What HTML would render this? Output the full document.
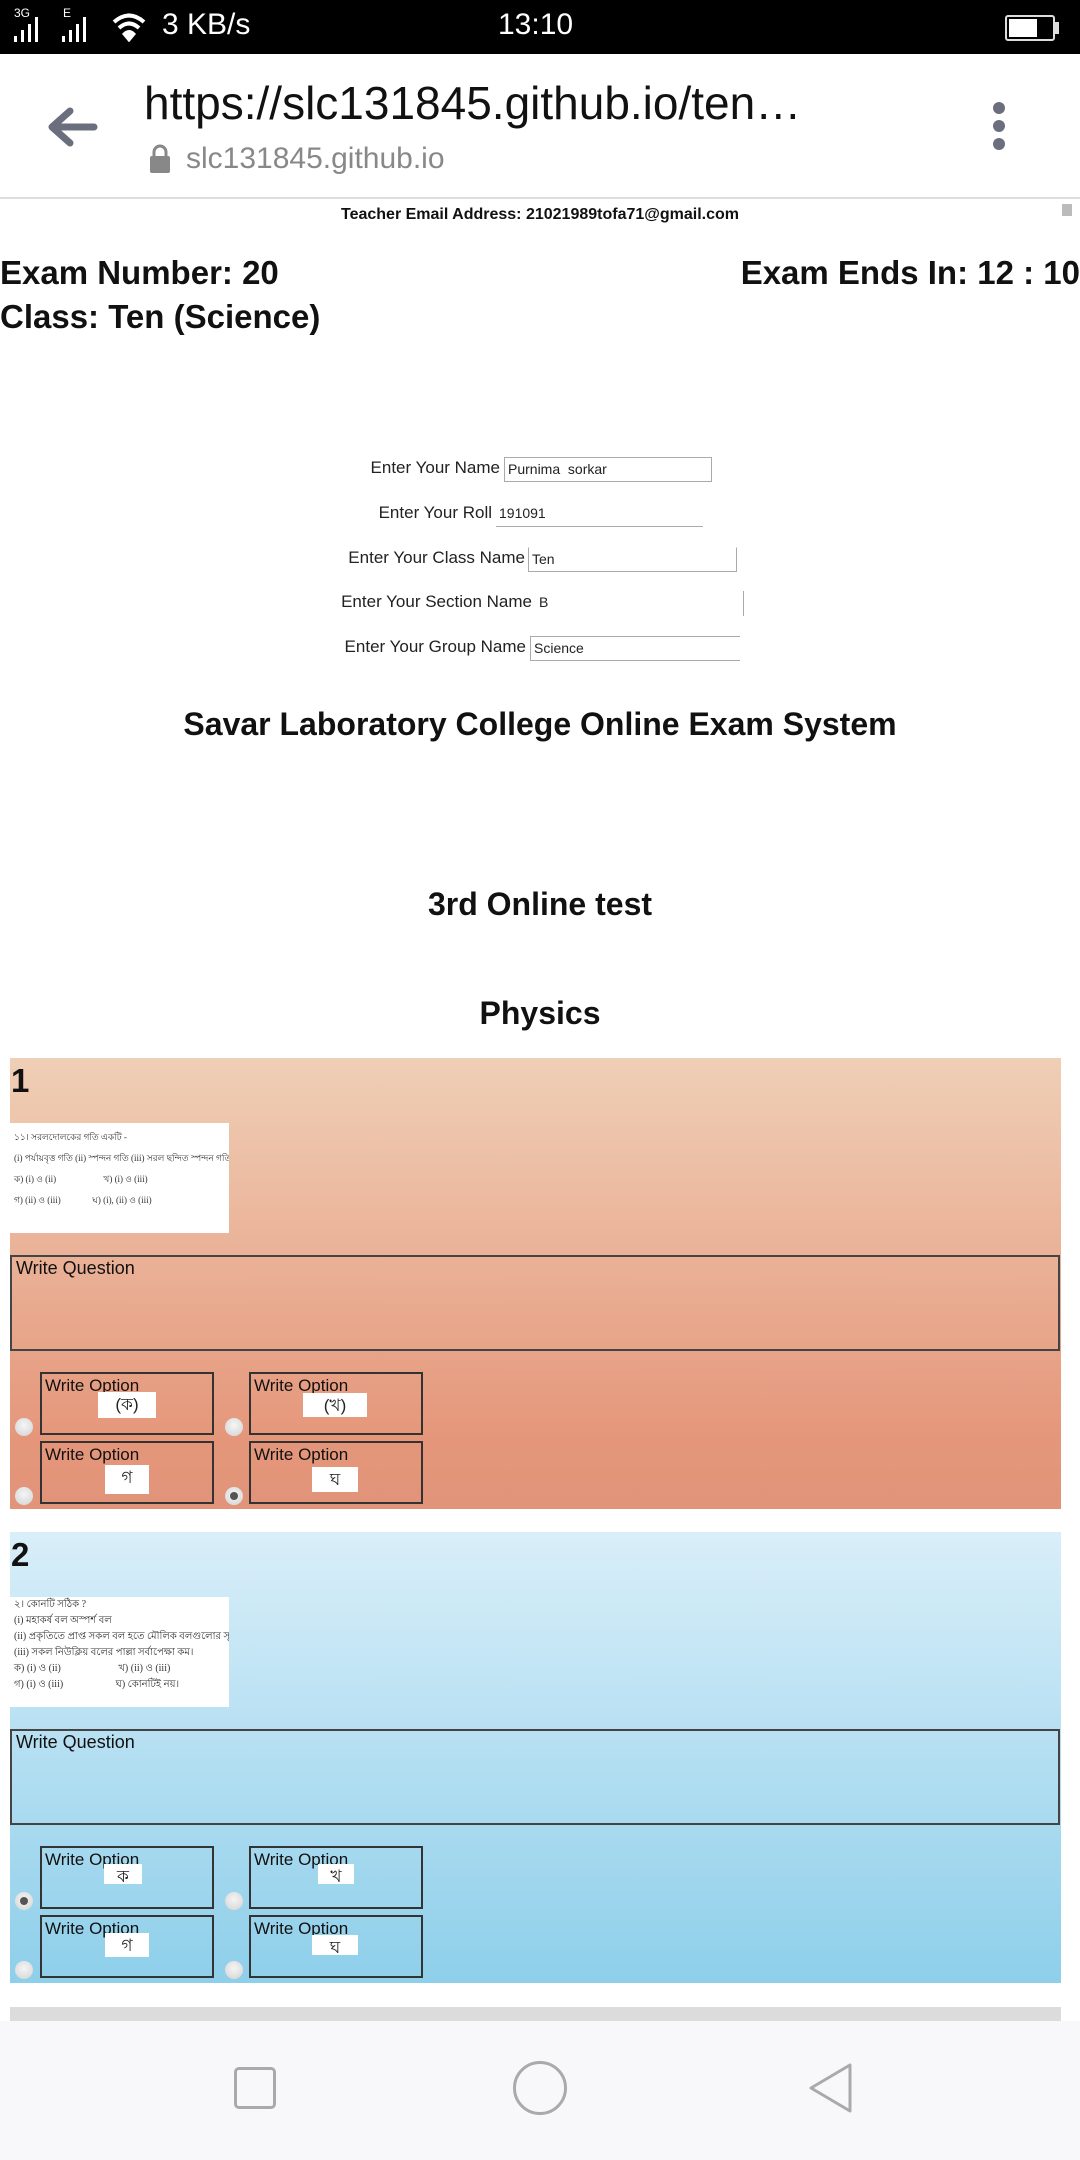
<!DOCTYPE html>
<html><head><meta charset="utf-8"><style>
*{margin:0;padding:0;box-sizing:border-box}
body{width:1080px;height:2160px;position:relative;overflow:hidden;background:#fff;font-family:"Liberation Sans","Noto Sans CJK SC",sans-serif;color:#111}
.a{position:absolute}
.status{left:0;top:0;width:1080px;height:54px;background:#000;color:#fff}
.lbl{font-size:17px;color:#222;white-space:nowrap}
.inp{font-size:14px;color:#222;padding-left:3px;line-height:22px}
.card{left:10px;width:1051px;height:451px}
.c1{background:linear-gradient(#efcfb6,#e5967a 85%,#e1947a)}
.c2{background:linear-gradient(#d9eef9,#8ecfea)}
.num{left:1px;top:4px;font-size:33px;font-weight:bold}
.img{left:0;top:65px;width:219px;height:110px;background:#fff;font-size:9px;line-height:21px;padding:4px 4px;color:#333;font-family:"Liberation Serif",serif;white-space:nowrap;overflow:hidden}
.wq{left:0;top:197px;width:1050px;height:96px;border:2px solid #444;font-size:18px;padding:1px 4px}
.opt{width:174px;height:63px;border:2px solid #333;font-size:17px;padding:2px 3px;line-height:20px}
.ob{background:#fff;font-size:17px;text-align:center;line-height:26px;color:#222}
.rad{width:18px;height:18px;border-radius:50%;background:radial-gradient(circle at 50% 40%,#f5f5f5,#d2d2d2)}
.rad.on::after{content:"";position:absolute;left:5px;top:5px;width:8px;height:8px;border-radius:50%;background:#555}
.h{left:0;width:1080px;text-align:center;font-weight:bold}
</style></head><body>
<div class="a status">
 <div class="a" style="left:14px;top:6px;font-size:12px">3G</div>
 <div class="a" style="left:14px;top:16px;width:40px;height:26px;display:flex;align-items:flex-end;gap:4px"><i style="width:3px;height:6px;background:#fff"></i><i style="width:3px;height:12px;background:#fff"></i><i style="width:3px;height:18px;background:#fff"></i><i style="width:3px;height:25px;background:#fff"></i></div>
 <div class="a" style="left:63px;top:6px;font-size:12px">E</div>
 <div class="a" style="left:62px;top:16px;width:40px;height:26px;display:flex;align-items:flex-end;gap:4px"><i style="width:3px;height:6px;background:#fff"></i><i style="width:3px;height:12px;background:#fff"></i><i style="width:3px;height:18px;background:#fff"></i><i style="width:3px;height:25px;background:#fff"></i></div>
 <svg class="a" style="left:112px;top:12px" width="34" height="30" viewBox="0 0 34 30"><path d="M2 10 Q17 -3 32 10" stroke="#fff" stroke-width="4" fill="none"/><path d="M7 16 Q17 7 27 16" stroke="#fff" stroke-width="4" fill="none"/><path d="M12 22 Q17 17 22 22 L17 28Z" fill="#fff" stroke="#fff" stroke-width="3"/></svg>
 <div class="a" style="left:162px;top:8px;font-size:30px">3 KB/s</div>
 <div class="a" style="left:498px;top:8px;font-size:30px">13:10</div>
 <div class="a" style="left:1005px;top:15px;width:50px;height:26px;border:2px solid #ddd;border-radius:3px;padding:2px"><div style="width:28px;height:18px;background:#fff"></div></div>
 <div class="a" style="left:1055px;top:22px;width:4px;height:12px;background:#ddd"></div>
</div>
<svg class="a" style="left:46px;top:106px" width="52" height="42" viewBox="0 0 52 42"><path d="M48 21 H8 M24 5 L6 21 L24 37" stroke="#6b6e7c" stroke-width="7" fill="none" stroke-linecap="round" stroke-linejoin="round"/></svg>
<div class="a" style="left:144px;top:76px;font-size:46px;color:#111;white-space:nowrap">https://slc131845.github.io/ten…</div>
<svg class="a" style="left:148px;top:144px" width="24" height="30" viewBox="0 0 24 30"><path d="M6 13 V8 a6 6 0 0 1 12 0 V13" stroke="#888" stroke-width="3" fill="none"/><rect x="2" y="12" width="20" height="17" rx="2" fill="#888"/></svg>
<div class="a" style="left:186px;top:142px;font-size:30px;color:#888">slc131845.github.io</div>
<div class="a" style="left:993px;top:102px;width:12px;height:12px;border-radius:50%;background:#6b6e7c"></div>
<div class="a" style="left:993px;top:120px;width:12px;height:12px;border-radius:50%;background:#6b6e7c"></div>
<div class="a" style="left:993px;top:138px;width:12px;height:12px;border-radius:50%;background:#6b6e7c"></div>
<div class="a" style="left:0;top:197px;width:1080px;height:2px;background:#ddd"></div>
<div class="a h" style="top:206px;font-size:16px">Teacher Email Address: 21021989tofa71@gmail.com</div>
<div class="a" style="left:1062px;top:204px;width:10px;height:12px;background:#bbb"></div>
<div class="a" style="left:0;top:254px;font-size:33px;font-weight:bold">Exam Number: 20</div>
<div class="a" style="right:0;top:254px;font-size:33px;font-weight:bold">Exam Ends In: 12 : 10</div>
<div class="a" style="left:0;top:298px;font-size:33px;font-weight:bold">Class: Ten (Science)</div>

<div class="a lbl" style="right:580px;top:458px">Enter Your Name</div>
<div class="a inp" style="left:504px;top:457px;width:208px;height:25px;border:1px solid #aaa">Purnima&nbsp; sorkar</div>
<div class="a lbl" style="right:588px;top:503px">Enter Your Roll</div>
<div class="a inp" style="left:496px;top:502px;width:207px;height:25px;border-bottom:1px solid #aaa">191091</div>
<div class="a lbl" style="right:555px;top:548px">Enter Your Class Name</div>
<div class="a inp" style="left:528px;top:547px;width:209px;height:25px;border:1px solid #aaa;border-top-color:#fff">Ten</div>
<div class="a lbl" style="right:548px;top:592px">Enter Your Section Name</div>
<div class="a inp" style="left:536px;top:591px;width:208px;height:25px;border-right:1px solid #aaa">B</div>
<div class="a lbl" style="right:554px;top:637px">Enter Your Group Name</div>
<div class="a inp" style="left:530px;top:636px;width:210px;height:25px;border:1px solid #aaa;border-right:none">Science</div>

<div class="a h" style="top:706px;font-size:32px">Savar Laboratory College Online Exam System</div>
<div class="a h" style="top:886px;font-size:32px">3rd Online test</div>
<div class="a h" style="top:995px;font-size:32px">Physics</div>

<div class="a card c1" style="top:1058px">
 <div class="a num">1</div>
 <div class="a img">১১। সরলদোলকের গতি একটি -<br>(i) পর্যায়বৃত্ত গতি (ii) স্পন্দন গতি (iii) সরল ছন্দিত স্পন্দন গতি।<br>ক) (i) ও (ii) &nbsp;&nbsp;&nbsp;&nbsp;&nbsp;&nbsp;&nbsp;&nbsp;&nbsp;&nbsp;&nbsp;&nbsp;&nbsp;&nbsp;&nbsp;&nbsp;&nbsp;&nbsp;&nbsp;&nbsp;খ) (i) ও (iii)<br>গ) (ii) ও (iii) &nbsp;&nbsp;&nbsp;&nbsp;&nbsp;&nbsp;&nbsp;&nbsp;&nbsp;&nbsp;&nbsp;&nbsp;&nbsp;ঘ) (i), (ii) ও (iii)</div>
 <div class="a wq">Write Question</div>
 <div class="a opt" style="left:30px;top:314px">Write Option</div>
 <div class="a ob" style="left:88px;top:334px;width:58px;height:26px">(ক)</div>
 <div class="a opt" style="left:239px;top:314px">Write Option</div>
 <div class="a ob" style="left:293px;top:335px;width:64px;height:24px">(খ)</div>
 <div class="a opt" style="left:30px;top:383px">Write Option</div>
 <div class="a ob" style="left:95px;top:407px;width:44px;height:29px">গ</div>
 <div class="a ob" style="left:302px;top:409px;width:46px;height:25px">ঘ</div>
 <div class="a opt" style="left:239px;top:383px">Write Option</div>
 <div class="a rad" style="left:5px;top:360px"></div>
 <div class="a rad" style="left:215px;top:360px"></div>
 <div class="a rad" style="left:5px;top:429px"></div>
 <div class="a rad on" style="left:215px;top:429px"></div>
</div>

<div class="a card c2" style="top:1532px">
 <div class="a num">2</div>
 <div class="a img" style="line-height:16px;padding-top:0;font-size:10px">২। কোনটি সঠিক ?<br>(i) মহাকর্ষ বল অস্পর্শ বল<br>(ii) প্রকৃতিতে প্রাপ্ত সকল বল হতে মৌলিক বলগুলোর সৃষ্টি<br>(iii) সকল নিউক্লিয় বলের পাল্লা সর্বাপেক্ষা কম।<br>ক) (i) ও (ii) &nbsp;&nbsp;&nbsp;&nbsp;&nbsp;&nbsp;&nbsp;&nbsp;&nbsp;&nbsp;&nbsp;&nbsp;&nbsp;&nbsp;&nbsp;&nbsp;&nbsp;&nbsp;&nbsp;&nbsp;&nbsp;&nbsp;খ) (ii) ও (iii)<br>গ) (i) ও (iii) &nbsp;&nbsp;&nbsp;&nbsp;&nbsp;&nbsp;&nbsp;&nbsp;&nbsp;&nbsp;&nbsp;&nbsp;&nbsp;&nbsp;&nbsp;&nbsp;&nbsp;&nbsp;&nbsp;&nbsp;ঘ) কোনটিই নয়।</div>
 <div class="a wq">Write Question</div>
 <div class="a opt" style="left:30px;top:314px">Write Option</div>
 <div class="a ob" style="left:94px;top:332px;width:38px;height:20px">ক</div>
 <div class="a opt" style="left:239px;top:314px">Write Option</div>
 <div class="a ob" style="left:308px;top:332px;width:36px;height:20px">খ</div>
 <div class="a opt" style="left:30px;top:383px">Write Option</div>
 <div class="a ob" style="left:95px;top:401px;width:44px;height:24px">গ</div>
 <div class="a opt" style="left:239px;top:383px">Write Option</div>
 <div class="a ob" style="left:302px;top:403px;width:46px;height:20px">ঘ</div>
 <div class="a rad on" style="left:5px;top:360px"></div>
 <div class="a rad" style="left:215px;top:360px"></div>
 <div class="a rad" style="left:5px;top:429px"></div>
 <div class="a rad" style="left:215px;top:429px"></div>
</div>
<div class="a" style="left:10px;top:2007px;width:1051px;height:16px;background:#dcdcdc"></div>
<div class="a" style="left:0;top:2021px;width:1080px;height:139px;background:#f8f7fa"></div>
<div class="a" style="left:234px;top:2067px;width:42px;height:42px;border:3px solid #aaa;border-radius:5px"></div>
<div class="a" style="left:513px;top:2061px;width:54px;height:54px;border:3px solid #aaa;border-radius:50%"></div>
<svg class="a" style="left:806px;top:2062px" width="50" height="52" viewBox="0 0 50 52"><path d="M44 3 V49 L5 26 Z" stroke="#aaa" stroke-width="3" fill="none" stroke-linejoin="round"/></svg>
</body></html>
